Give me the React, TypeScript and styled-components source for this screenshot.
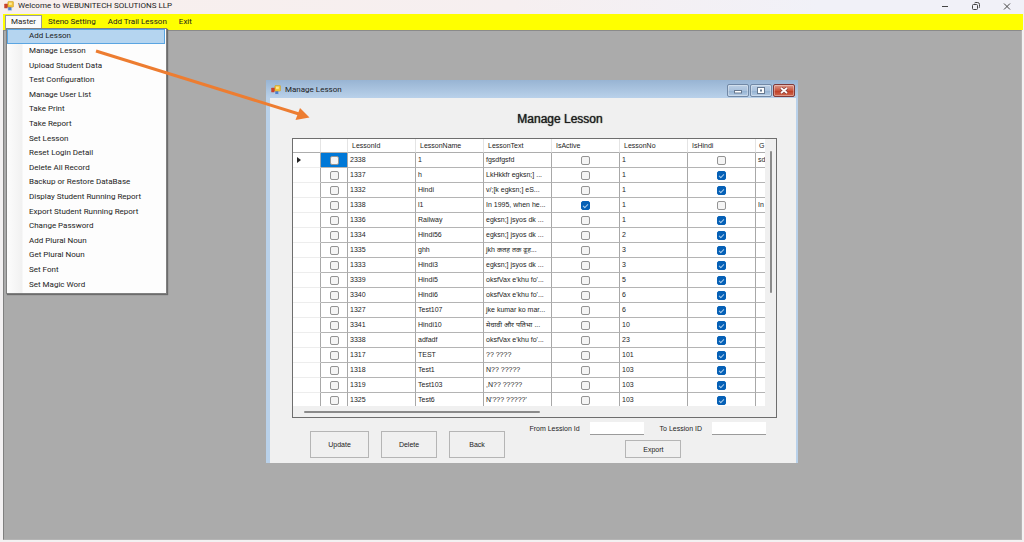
import React from 'react';
import styled, { createGlobalStyle, css } from 'styled-components';

const uiFont = `Roboto, "Noto Sans", sans-serif`;
const formFont = `"Liberation Sans", "Noto Sans", sans-serif`;

const GlobalStyle = createGlobalStyle`
  *, *::before, *::after { box-sizing: border-box; }
  body { margin: 0; background: #f3f1f2; color: #1c1c1c; font-family: ${uiFont}; font-size: 8px; }
  button, input { font: inherit; color: inherit; margin: 0; padding: 0; }
`;

const AppWindow = styled.div`
  position: relative;
  display: flex;
  flex-direction: column;
  min-height: 100vh;
`;

const TitleBar = styled.header`
  display: flex;
  align-items: center;
  justify-content: space-between;
  height: 14px;
  padding: 0 12px 2px 4px;
  background: linear-gradient(90deg, #f8efed, #f6eff0 50%, #f1f1f8 80%);
`;

const WindowTitle = styled.div`
  display: flex;
  align-items: center;
  gap: 4px;
  line-height: 12px;
  white-space: nowrap;
`;

const WindowControls = styled.div`
  display: flex;
  align-items: center;
  gap: 21px;
`;

const GlyphButton = styled.button`
  display: flex;
  width: 10px;
  height: 10px;
  border: 0;
  background: none;
`;

const MenuBar = styled.nav`
  display: flex;
  align-items: stretch;
  height: 16px;
  margin: 0 1px 0 3px;
  padding: 1px 0 0 2px;
  background: #ffff00;
`;

const MenuBarItem = styled.button<{ $open?: boolean }>`
  display: flex;
  align-items: center;
  padding: 0 5px 2px;
  border: 1px solid ${p => (p.$open ? '#9a9a9a' : 'transparent')};
  border-bottom: 0;
  background: ${p => (p.$open ? '#fbfbfb' : 'none')};
  line-height: 12px;
  white-space: nowrap;
`;

const Workspace = styled.main`
  position: relative;
  flex: 1;
  margin: 0 2px 2px 3px;
  background: #ababab;
  border: 1px solid #b4b4b4;
  border-left: 1px solid #808080;
  border-top: 1px solid #8a8a8a;
`;

const DropDown = styled.ul`
  position: absolute;
  z-index: 2;
  top: 28px;
  left: 6px;
  display: grid;
  grid-auto-rows: 1fr;
  width: 161px;
  height: 266px;
  margin: 0;
  padding: 0 1px 1px 0;
  list-style: none;
  border: 1px solid #808080;
  background: linear-gradient(90deg, #fcfcfc, #f1f1f1 15px, #fdfdfd 16px);
  box-shadow: 1px 1px 1px #6c6c6c;
`;

const DropDownItem = styled.button<{ $active?: boolean }>`
  display: flex;
  align-items: center;
  width: 100%;
  height: 100%;
  padding: 0 0 0 21px;
  border: 1px solid transparent;
  background: none;
  line-height: 12px;
  text-align: left;
  white-space: nowrap;
  ${p => p.$active && css`
    border-color: #5aa5e2;
    background: #b5d5f0;
  `}
`;

const Dialog = styled.section`
  position: absolute;
  top: 49px;
  left: 262px;
  width: 532px;
  border: solid #b9d1ea;
  border-width: 0 2px 0 4px;
  background: #f0f0f0;
  font-family: ${formFont};
  font-size: 7px;
`;

const DialogBar = styled.header`
  display: flex;
  align-items: center;
  justify-content: space-between;
  height: 18px;
  margin: 0 -2px 0 -4px;
  padding: 2px 3px 0 5px;
  background: linear-gradient(#98b4d3, #b9d1ea);
  font-family: ${uiFont};
  font-size: 8px;
`;

const CaptionButtons = styled.div`
  display: flex;
  gap: 1px;
`;

const CaptionButton = styled.button<{ $close?: boolean }>`
  display: flex;
  align-items: center;
  justify-content: center;
  width: 22px;
  height: 13px;
  border: 1px solid ${p => (p.$close ? '#7f3a3a' : '#7188a5')};
  border-radius: 2px;
  box-shadow: inset 0 0 0 1px #ffffff55;
  background: ${p => (p.$close
    ? 'linear-gradient(#dc9a8c, #c9543c 50%, #bd3a22 51%, #d0694f)'
    : 'linear-gradient(#bdd0e5, #a9c1dc 50%, #92b0d0 51%, #b4cbe4)')};
`;

const DialogBody = styled.div`
  padding: 13px 19px 5px 22px;
`;

const Heading = styled.h1`
  margin: 0 0 11px;
  padding-left: 51px;
  font-size: 12px;
  font-weight: 400;
  line-height: 16px;
  text-align: center;
  text-shadow: 0 0 1px #1c1c1c;
`;

const GridFrame = styled.div`
  display: grid;
  grid-template-columns: 1fr 11px;
  grid-template-rows: 267px 11px;
  border: 1px solid #6e6e6e;
`;

const GridViewport = styled.div`
  overflow: hidden;
  background: #fff;
`;

const ScrollTrack = styled.div<{ $horizontal?: boolean }>`
  padding: ${p => (p.$horizontal ? '5px 0 0 11px' : '12px 0 0 5px')};
`;

const ScrollThumb = styled.div<{ $horizontal?: boolean }>`
  width: ${p => (p.$horizontal ? '236px' : '2px')};
  height: ${p => (p.$horizontal ? '2px' : '142px')};
  border-radius: 1px;
  background: #8b8b8b;
`;

const Table = styled.table`
  width: 531px;
  table-layout: fixed;
  border-collapse: separate;
  border-spacing: 0;
`;

const Col = styled.col<{ $width?: number }>`
  width: ${p => p.$width ?? 68}px;
`;

const HeadCell = styled.th`
  height: 14px;
  padding: 0 0 0 4px;
  border-right: 1px solid #e4e4e4;
  border-bottom: 1px solid #adadad;
  font-weight: 400;
  line-height: 13px;
  text-align: left;

  &:last-child {
    padding-left: 3px;
  }
`;

const Cell = styled.td<{ $selected?: boolean; $center?: boolean }>`
  height: 15px;
  padding: ${p => (p.$center ? '0' : '0 0 0 2px')};
  border-right: 1px solid #a8a8a8;
  border-bottom: 1px solid #b4b4b4;
  background: ${p => (p.$selected ? '#0078d7' : '#fff')};
  line-height: 14px;
  text-align: ${p => (p.$center ? 'center' : 'left')};
  white-space: nowrap;
`;

const RowHeader = styled(Cell)`
  border-bottom-color: #ededed;
  padding-left: 4px;
`;

const Marker = styled.svg`
  display: block;
`;

const Check = styled.input`
  appearance: none;
  position: relative;
  display: block;
  width: 9px;
  height: 9px;
  margin: 0 auto;
  border: 1px solid #949494;
  border-radius: 2px;
  background: #f5f5f5;

  &:checked {
    border-color: #0560b6;
    background: #0560b6;
  }

  &:checked::after {
    content: '';
    position: absolute;
    top: 2px;
    left: 1px;
    width: 5px;
    height: 3px;
    border: solid #a9cbea;
    border-width: 0 0 1px 1px;
    transform: rotate(-45deg);
  }
`;

const Footer = styled.footer`
  display: flex;
  justify-content: space-between;
  padding: 4px 11px 0 18px;
`;

const Actions = styled.div`
  display: flex;
  gap: 12px;
  padding-top: 9px;
`;

const PushButton = styled.button<{ $small?: boolean }>`
  width: 56px;
  height: ${p => (p.$small ? '18px' : '27px')};
  border: 1px solid #b5b5b5;
  background: #f0f0f0;
`;

const WideButton = styled(PushButton)`
  width: 59px;
`;

const ExportForm = styled.form`
  display: flex;
  flex-direction: column;
  align-items: flex-start;
  gap: 5px;
`;

const ExportButton = styled(PushButton)`
  margin-left: 96px;
`;

const Fields = styled.div`
  display: flex;
  gap: 16px;
`;

const Field = styled.label`
  display: flex;
  align-items: center;
  gap: 10px;
  white-space: nowrap;
`;

const TextBox = styled.input`
  width: 54px;
  height: 13px;
  border: 0;
  border-bottom: 1px solid #9b9b9b;
  background: #fff;
`;

const ArrowLayer = styled.svg`
  position: absolute;
  z-index: 3;
  top: 40px;
  left: 90px;
  pointer-events: none;
`;

const menuItems = [
  'Add Lesson', 'Manage Lesson', 'Upload Student Data', 'Test Configuration', 'Manage User List',
  'Take Print', 'Take Report', 'Set Lesson', 'Reset Login Detail', 'Delete All Record',
  'Backup or Restore DataBase', 'Display Student Running Report', 'Export Student Running Report',
  'Change Password', 'Add Plural Noun', 'Get Plural Noun', 'Set Font', 'Set Magic Word',
];

type Lesson = [id: string, name: string, text: string, active: boolean, no: string, hindi: boolean, extra?: string];

const lessons: Lesson[] = [
  ['2338', '1', 'fgsdfgsfd', false, '1', false, 'sd'],
  ['1337', 'h', 'LkHkkfr egksn;] ...', false, '1', true],
  ['1332', 'Hindi', 'v/;[k egksn;] eS...', false, '1', true],
  ['1338', 'l1', 'In 1995, when he...', true, '1', false, 'In'],
  ['1336', 'Railway', 'egksn;] jsyos dk ...', false, '1', true],
  ['1334', 'Hindi56', 'egksn;] jsyos dk ...', false, '2', true],
  ['1335', 'ghh', 'jkh कतह तक ढूह...', false, '3', true],
  ['1333', 'Hindi3', 'egksn;] jsyos dk ...', false, '3', true],
  ['3339', 'Hindi5', "oksfVax e'khu fo'...", false, '5', true],
  ['3340', 'Hindi6', "oksfVax e'khu fo'...", false, '6', true],
  ['1327', 'Test107', 'jke kumar ko mar...', false, '6', true],
  ['3341', 'Hindi10', 'मेधावी और पतिभा ...', false, '10', true],
  ['3338', 'adfadf', "oksfVax e'khu fo'...", false, '23', true],
  ['1317', 'TEST', '?? ????', false, '101', true],
  ['1318', 'Test1', 'N?? ?????', false, '103', true],
  ['1319', 'Test103', ',N?? ?????', false, '103', true],
  ['1325', 'Test6', "N'??? ?????'", false, '103', true],
];

const FormIcon = () => (
  <svg width="10" height="10" viewBox="0 0 18 18" aria-hidden="true">
    <rect x="0.5" y="5" width="8" height="8" rx="1" fill="#c8402c" />
    <rect x="7" y="10" width="7" height="7" rx="1" fill="#4a7fd0" stroke="#dfe8f5" />
    <rect x="7" y="1" width="10" height="10" rx="1" fill="#f3c63c" stroke="#c99a20" />
    <rect x="9" y="3" width="5" height="4" fill="#fbe698" />
  </svg>
);

const App = () => (
  <AppWindow>
    <GlobalStyle />
    <TitleBar>
      <WindowTitle><FormIcon />Welcome to WEBUNITECH SOLUTIONS LLP</WindowTitle>
      <WindowControls>
        <GlyphButton aria-label="Minimize">
          <svg width="10" height="10" viewBox="0 0 10 10"><path d="M2 5.5h6" stroke="#444" /></svg>
        </GlyphButton>
        <GlyphButton aria-label="Restore">
          <svg width="10" height="10" viewBox="0 0 10 10" fill="none" stroke="#444">
            <rect x="1.5" y="3.5" width="5" height="5" rx="1" />
            <path d="M3.5 2Q4 1.5 5 1.5H6.5Q8.5 1.5 8.5 3.5V5.5Q8.5 6.5 8 7" />
          </svg>
        </GlyphButton>
        <GlyphButton aria-label="Close">
          <svg width="10" height="10" viewBox="0 0 10 10"><path d="M2 2.5l6 6M8 2.5l-6 6" stroke="#444" /></svg>
        </GlyphButton>
      </WindowControls>
    </TitleBar>
    <MenuBar>
      <MenuBarItem $open>Master</MenuBarItem>
      <MenuBarItem>Steno Setting</MenuBarItem>
      <MenuBarItem>Add Trail Lesson</MenuBarItem>
      <MenuBarItem>Exit</MenuBarItem>
    </MenuBar>
    <DropDown>
      {menuItems.map((item, i) => (
        <li key={item}><DropDownItem $active={i === 0}>{item}</DropDownItem></li>
      ))}
    </DropDown>
    <Workspace>
      <Dialog aria-label="Manage Lesson">
        <DialogBar>
          <WindowTitle><FormIcon />Manage Lesson</WindowTitle>
          <CaptionButtons>
            <CaptionButton aria-label="Minimize">
              <svg width="10" height="7" viewBox="0 0 10 7"><rect x="1.5" y="3.5" width="7" height="2.5" fill="#fff" stroke="#66788f" /></svg>
            </CaptionButton>
            <CaptionButton aria-label="Maximize">
              <svg width="10" height="7" viewBox="0 0 10 7"><rect x="1.5" y="0.5" width="7" height="6" fill="#fff" stroke="#66788f" /><rect x="4" y="2.5" width="2" height="2" fill="#66788f" /></svg>
            </CaptionButton>
            <CaptionButton $close aria-label="Close">
              <svg width="10" height="7" viewBox="0 0 10 7"><path d="M2 1l6 5M8 1l-6 5" stroke="#7d3d3d" strokeWidth="3" /><path d="M2 1l6 5M8 1l-6 5" stroke="#fff" strokeWidth="1.7" /></svg>
            </CaptionButton>
          </CaptionButtons>
        </DialogBar>
        <DialogBody>
          <Heading>Manage Lesson</Heading>
          <GridFrame>
            <GridViewport>
              <Table>
                <colgroup>
                  <Col $width={28} /><Col $width={27} /><Col /><Col /><Col /><Col /><Col /><Col /><Col />
                </colgroup>
                <thead>
                  <tr>
                    {['', '', 'LessonId', 'LessonName', 'LessonText', 'IsActive', 'LessonNo', 'IsHindi', 'G'].map((h, i) => (
                      <HeadCell key={i}>{h}</HeadCell>
                    ))}
                  </tr>
                </thead>
                <tbody>
                  {lessons.map(([id, name, text, active, no, hindi, extra], i) => (
                    <tr key={id}>
                      <RowHeader>
                        {i === 0 && <Marker width="4" height="8" viewBox="0 0 4 8"><path d="M0 1l4 3-4 3z" fill="#222" /></Marker>}
                      </RowHeader>
                      <Cell $center $selected={i === 0}><Check type="checkbox" aria-label={`Select ${id}`} /></Cell>
                      <Cell>{id}</Cell>
                      <Cell>{name}</Cell>
                      <Cell>{text}</Cell>
                      <Cell $center><Check type="checkbox" aria-label={`Active ${id}`} defaultChecked={active} /></Cell>
                      <Cell>{no}</Cell>
                      <Cell $center><Check type="checkbox" aria-label={`Hindi ${id}`} defaultChecked={hindi} /></Cell>
                      <Cell>{extra}</Cell>
                    </tr>
                  ))}
                </tbody>
              </Table>
            </GridViewport>
            <ScrollTrack><ScrollThumb /></ScrollTrack>
            <ScrollTrack $horizontal><ScrollThumb $horizontal /></ScrollTrack>
          </GridFrame>
          <Footer>
            <Actions>
              <WideButton>Update</WideButton>
              <PushButton>Delete</PushButton>
              <PushButton>Back</PushButton>
            </Actions>
            <ExportForm onSubmit={e => e.preventDefault()}>
              <Fields>
                <Field>From Lession Id<TextBox type="text" /></Field>
                <Field>To Lession ID<TextBox type="text" /></Field>
              </Fields>
              <ExportButton $small>Export</ExportButton>
            </ExportForm>
          </Footer>
        </DialogBody>
      </Dialog>
    </Workspace>
    <ArrowLayer width="222" height="84" viewBox="90 40 222 84" aria-hidden="true">
      <path d="M96 51L299 114" stroke="#ed7d31" strokeWidth="3" />
      <path d="M300 108l9.5 9.5L295.5 120z" fill="#ed7d31" />
    </ArrowLayer>
  </AppWindow>
);

export default App;
